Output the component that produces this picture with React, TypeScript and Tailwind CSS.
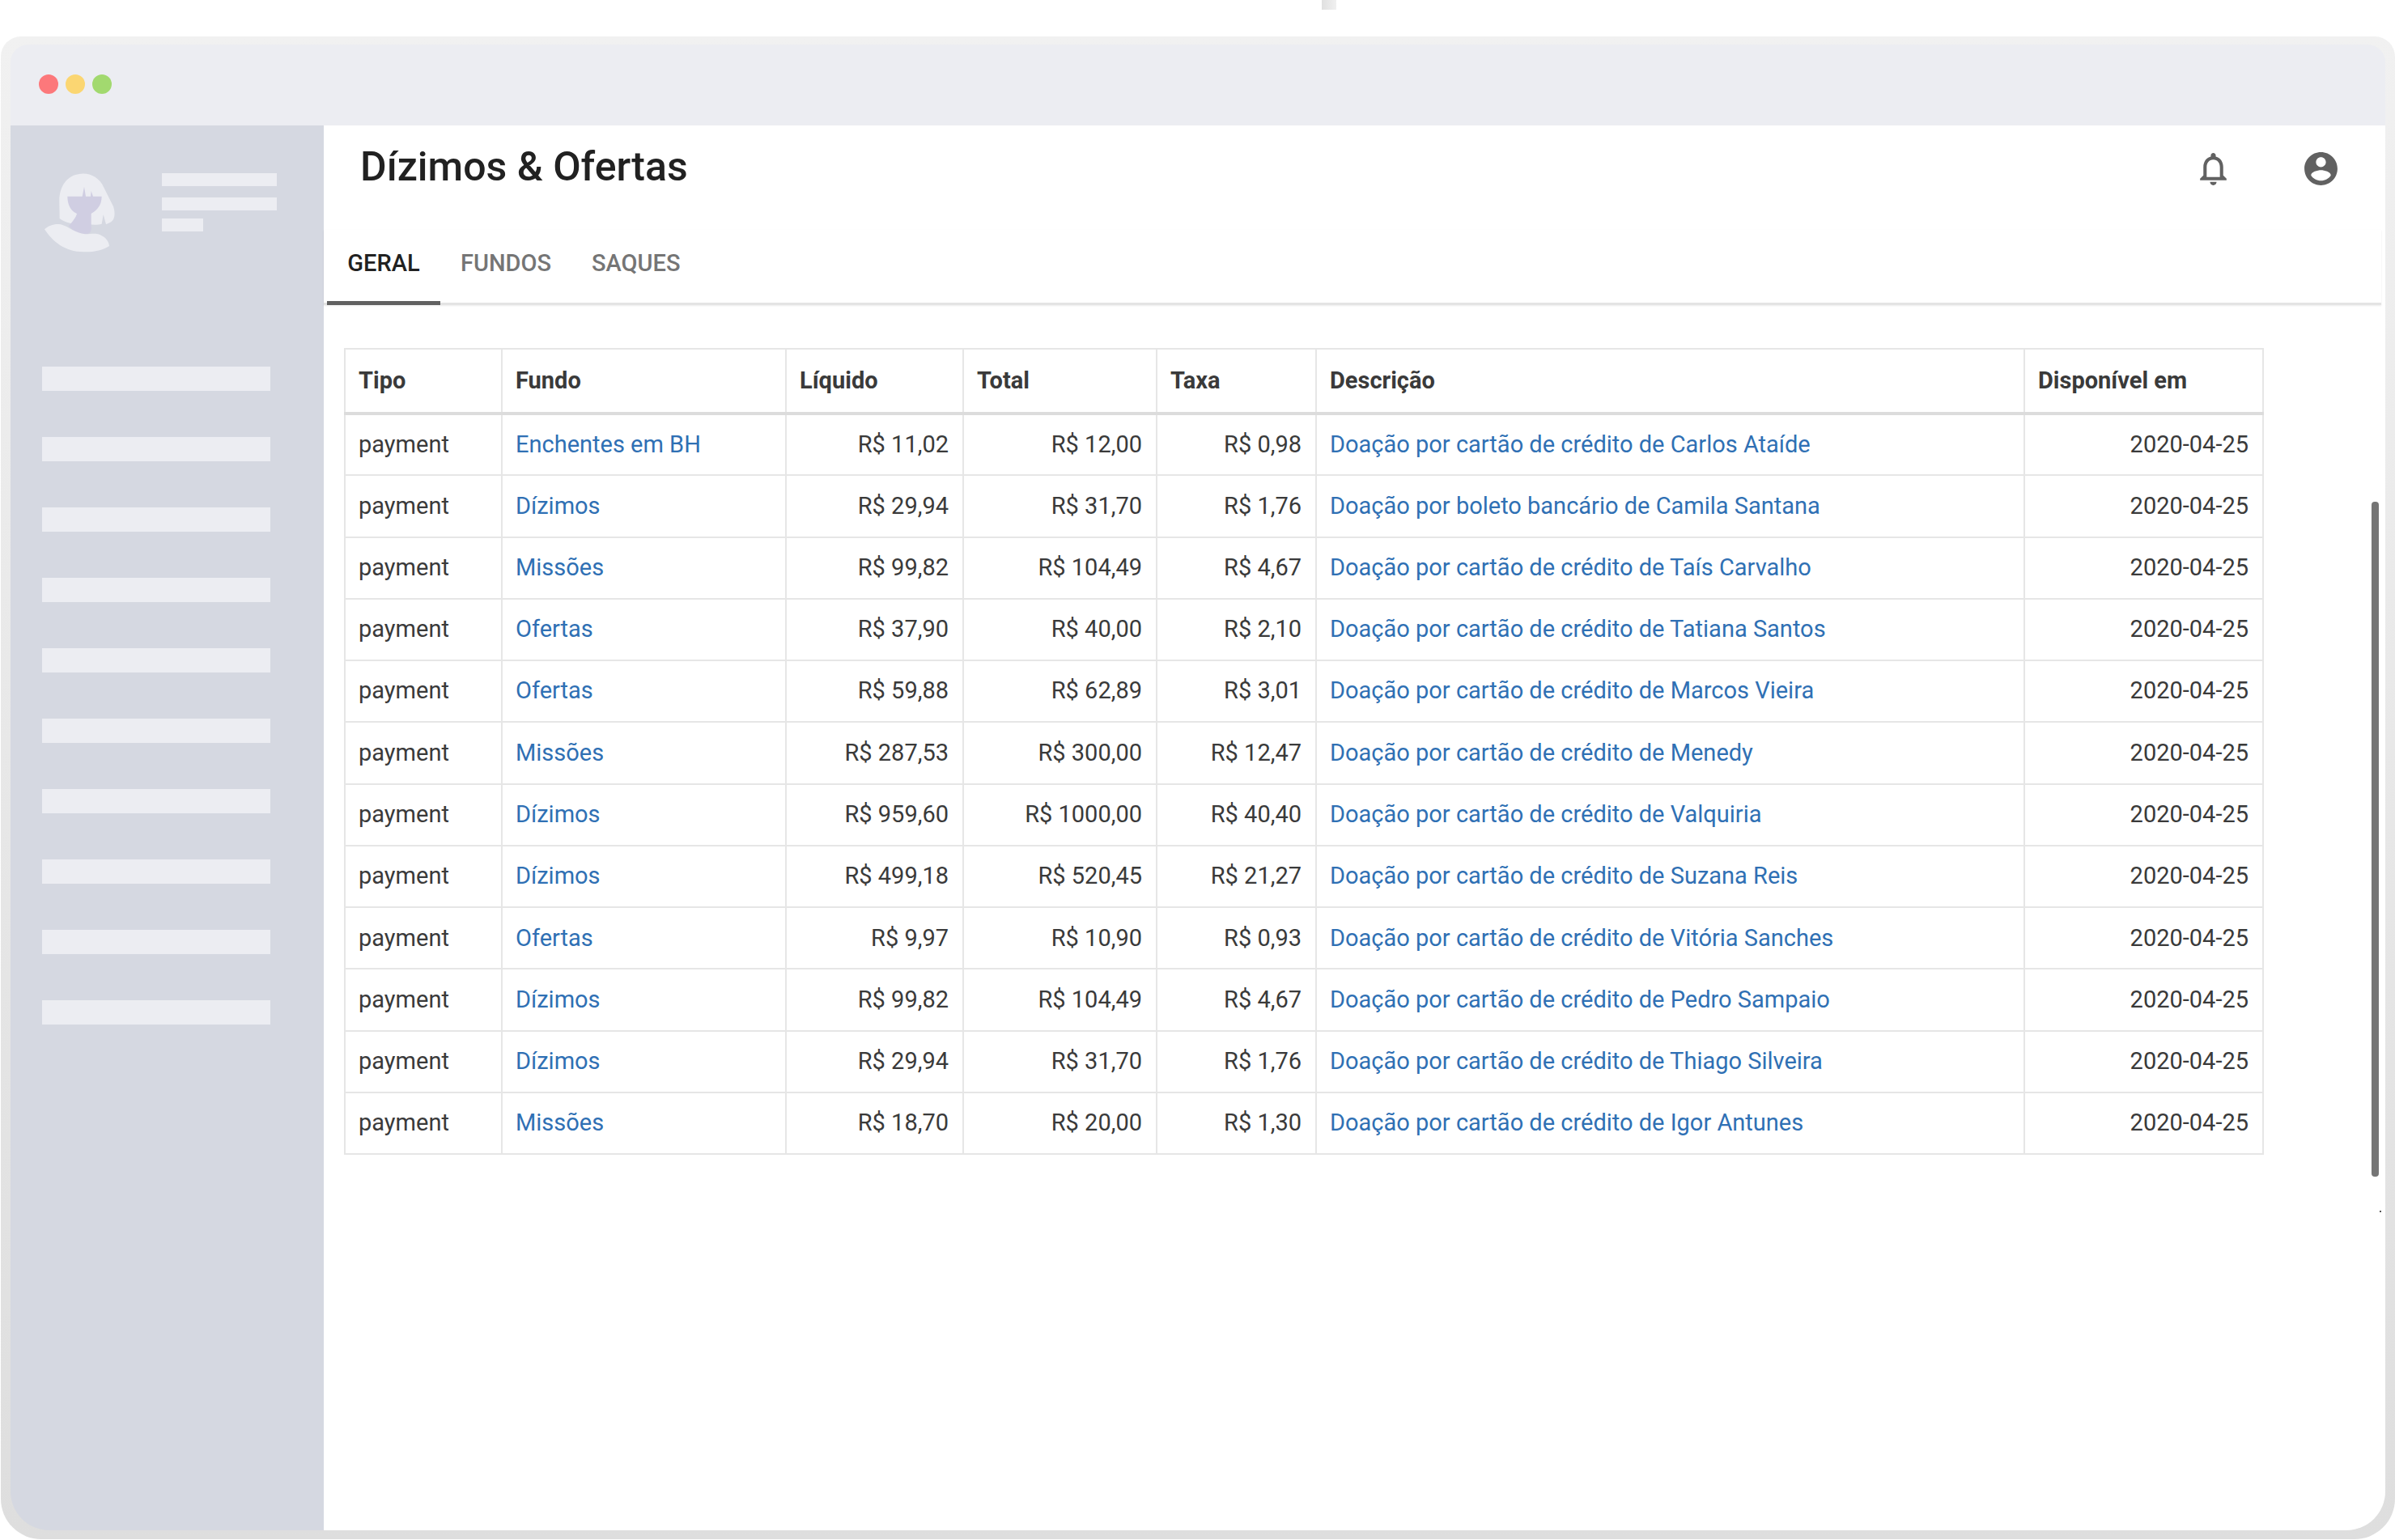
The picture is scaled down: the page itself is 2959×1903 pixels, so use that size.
import React from "react";

const rows = [
  ["Enchentes em BH", "R$ 11,02", "R$ 12,00", "R$ 0,98", "Doação por cartão de crédito de Carlos Ataíde"],
  ["Dízimos", "R$ 29,94", "R$ 31,70", "R$ 1,76", "Doação por boleto bancário de Camila Santana"],
  ["Missões", "R$ 99,82", "R$ 104,49", "R$ 4,67", "Doação por cartão de crédito de Taís Carvalho"],
  ["Ofertas", "R$ 37,90", "R$ 40,00", "R$ 2,10", "Doação por cartão de crédito de Tatiana Santos"],
  ["Ofertas", "R$ 59,88", "R$ 62,89", "R$ 3,01", "Doação por cartão de crédito de Marcos Vieira"],
  ["Missões", "R$ 287,53", "R$ 300,00", "R$ 12,47", "Doação por cartão de crédito de Menedy"],
  ["Dízimos", "R$ 959,60", "R$ 1000,00", "R$ 40,40", "Doação por cartão de crédito de Valquiria"],
  ["Dízimos", "R$ 499,18", "R$ 520,45", "R$ 21,27", "Doação por cartão de crédito de Suzana Reis"],
  ["Ofertas", "R$ 9,97", "R$ 10,90", "R$ 0,93", "Doação por cartão de crédito de Vitória Sanches"],
  ["Dízimos", "R$ 99,82", "R$ 104,49", "R$ 4,67", "Doação por cartão de crédito de Pedro Sampaio"],
  ["Dízimos", "R$ 29,94", "R$ 31,70", "R$ 1,76", "Doação por cartão de crédito de Thiago Silveira"],
  ["Missões", "R$ 18,70", "R$ 20,00", "R$ 1,30", "Doação por cartão de crédito de Igor Antunes"],
];

const headers = ["Tipo", "Fundo", "Líquido", "Total", "Taxa", "Descrição", "Disponível em"];
const menuBars = Array.from({ length: 10 }, (_, i) => i);

const thClass = "border-2 border-b-4 border-[#e6e6e6] border-b-[#dcdcdc] px-[16px] text-left font-bold";
const tdClass = "border-2 border-[#e6e6e6] pl-[16px] pr-[17px]";

const Avatar = () => (
  <svg viewBox="0 0 420 420" className="h-[140px] w-[140px] shrink-0">
    <path
      d="M130 175C130 130 150 90 190 78C230 65 275 80 295 125L330 195C338 220 335 240 325 250C315 258 305 260 303 262L293 225L287 260C270 265 250 262 210 262C180 262 150 255 131 240C131 220 130 195 130 175Z"
      fill="#ecedf2"
    />
    <path
      d="M160 158L215 158L222 122L228 158L246 158L248 138L255 158L287 158C287 190 270 210 248 222L248 270C250 285 245 298 225 298C205 298 185 290 165 268C180 250 192 235 195 222C170 212 160 185 160 158Z"
      fill="#d0cee2"
    />
    <path
      d="M75 280C90 265 115 258 135 262C165 270 190 295 225 298C255 298 270 288 300 312C310 322 315 335 315 342C290 358 260 365 220 364C150 364 105 325 75 280Z"
      fill="#ecedf2"
    />
  </svg>
);

const BellIcon = () => (
  <svg viewBox="0 0 24 24" fill="#616161" className="h-[49px] w-[49px]">
    <path d="M12 22c1.1 0 2-.9 2-2h-4c0 1.1.9 2 2 2zm6-6v-5c0-3.07-1.63-5.64-4.5-6.32V4c0-.83-.67-1.5-1.5-1.5s-1.5.67-1.5 1.5v.68C7.64 5.36 6 7.92 6 11v5l-2 2v1h16v-1l-2-2zm-2 1H8v-6c0-2.48 1.51-4.5 4-4.5s4 2.02 4 4.5v6z" />
  </svg>
);

const AccountIcon = () => (
  <svg viewBox="0 0 24 24" fill="#616161" className="h-[49px] w-[49px]">
    <path d="M12 2C6.48 2 2 6.48 2 12s4.48 10 10 10 10-4.48 10-10S17.52 2 12 2zm0 3c1.66 0 3 1.34 3 3s-1.34 3-3 3-3-1.34-3-3 1.34-3 3-3zm0 14.2c-2.5 0-4.71-1.28-6-3.22.03-1.99 4-3.08 6-3.08 1.99 0 5.97 1.09 6 3.08-1.29 1.94-3.5 3.22-6 3.22z" />
  </svg>
);

const Sidebar = () => (
  <aside className="w-[387px] shrink-0 bg-[#d5d8e1] pl-[39px]">
    <div className="-ml-[22px] mt-[35px] flex items-start gap-[30px]">
      <Avatar />
      <div className="mt-[24px] flex flex-col">
        <div className="h-[16px] w-[142px] bg-[#ecedf2]" />
        <div className="mt-[14px] h-[16px] w-[142px] bg-[#ecedf2]" />
        <div className="mt-[10px] h-[16px] w-[51px] bg-[#ecedf2]" />
      </div>
    </div>
    <div className="mt-[123px] flex flex-col gap-[57px]">
      {menuBars.map((i) => (
        <div key={i} className="h-[30px] w-[282px] bg-[#ecedf2]" />
      ))}
    </div>
  </aside>
);

export default function App() {
  return (
    <div className="h-[1903px] w-[2959px] overflow-hidden bg-white font-['Roboto',sans-serif]">
      <div className="ml-[1633px] h-[12px] w-[18px] bg-gradient-to-r from-[#e0e0e0] to-[#f0f0f0]" />
      <div className="ml-px mt-[33px] h-[1857px] w-[2958px] rounded-t-[25px] rounded-b-[50px] bg-gradient-to-b from-[#f1f1f1] to-[#dedede] pb-[11px] pl-[12px] pr-[12px] pt-[10px]">
        <div className="flex h-full flex-col overflow-hidden rounded-t-[22px] rounded-b-[48px]">
          <div className="flex h-[100px] shrink-0 items-start gap-[9px] bg-[#ecedf2] pl-[35px] pt-[37px]">
            <span className="h-[24px] w-[24px] rounded-full bg-[#fc787b]" />
            <span className="h-[24px] w-[24px] rounded-full bg-[#fbd672]" />
            <span className="h-[24px] w-[24px] rounded-full bg-[#a2d96f]" />
          </div>
          <div className="flex min-h-0 flex-1">
            <Sidebar />
            <main className="relative flex-1 bg-white">
              <div className="flex items-start justify-between pl-[45px] pr-[55px]">
                <h1 className="mt-[23px] text-[50px] font-medium leading-[56px] text-[#212121]">Dízimos &amp; Ofertas</h1>
                <div className="mt-[29px] flex gap-[84px]">
                  <BellIcon />
                  <AccountIcon />
                </div>
              </div>
              <div className="mr-[5px] mt-[50px] flex h-[93px] border-b-[3px] border-[#e4e4e4] pl-[4px] text-[29px] font-medium shadow-[0_1px_2px_rgba(0,0,0,0.08)]">
                <div className="flex h-[93px] w-[140px] items-center justify-center border-b-[5px] border-[#616161] pb-[5px] text-[#212121]">GERAL</div>
                <div className="flex h-[93px] items-center border-b-[5px] border-transparent px-[25px] pb-[5px] text-[#757575]">FUNDOS</div>
                <div className="flex h-[93px] items-center border-b-[5px] border-transparent px-[25px] pb-[5px] text-[#757575]">SAQUES</div>
              </div>
              <div className="mt-[53px] pl-[25px]">
                <table className="w-[2370px] table-fixed border-collapse text-[29px] text-[#3a3a3a]">
                  <colgroup>
                    <col className="w-[194px]" />
                    <col className="w-[351px]" />
                    <col className="w-[219px]" />
                    <col className="w-[239px]" />
                    <col className="w-[197px]" />
                    <col className="w-[875px]" />
                    <col className="w-[295px]" />
                  </colgroup>
                  <thead>
                    <tr className="h-[80px]">
                      {headers.map((h) => (
                        <th key={h} className={thClass}>{h}</th>
                      ))}
                    </tr>
                  </thead>
                  <tbody>
                    {rows.map((r, i) => (
                      <tr key={i} className="h-[76.27px]">
                        <td className={tdClass}>payment</td>
                        <td className={`${tdClass} text-[#2f70b4]`}>{r[0]}</td>
                        <td className={`${tdClass} text-right`}>{r[1]}</td>
                        <td className={`${tdClass} text-right`}>{r[2]}</td>
                        <td className={`${tdClass} text-right`}>{r[3]}</td>
                        <td className={`${tdClass} text-[#2f70b4]`}>{r[4]}</td>
                        <td className={`${tdClass} text-right`}>2020-04-25</td>
                      </tr>
                    ))}
                  </tbody>
                </table>
              </div>
              {/* barra de scroll por cima do conteúdo */}
              <div className="absolute right-[8px] top-[465px] h-[834px] w-[9px] rounded-[4px] bg-[#757575]" />
              <div className="absolute right-[5px] top-[1341px] h-[2px] w-[2px] bg-[#555555]" />
            </main>
          </div>
        </div>
      </div>
    </div>
  );
}
